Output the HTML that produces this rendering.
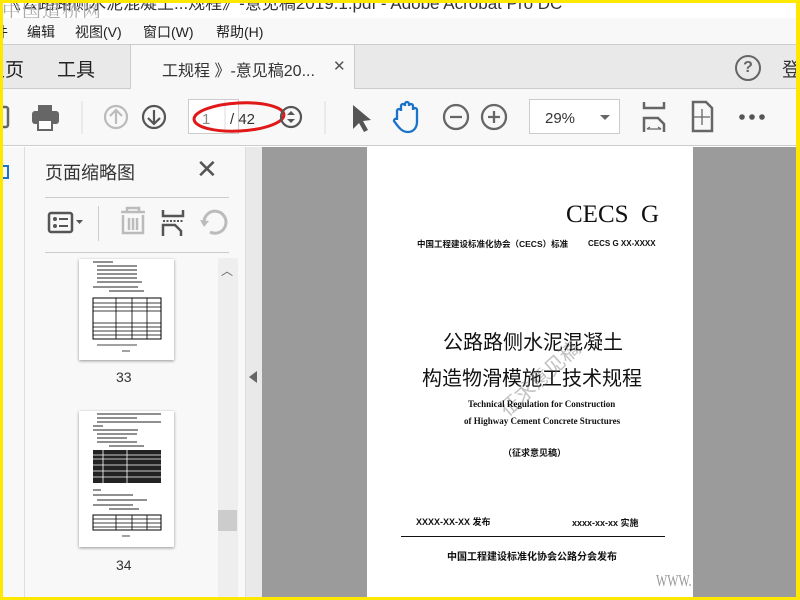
<!DOCTYPE html>
<html><head><meta charset="utf-8"><style>
*{margin:0;padding:0;box-sizing:border-box}
body{width:800px;height:600px;overflow:hidden;position:relative;background:#fff;font-family:"Liberation Sans","Noto Sans CJK SC",sans-serif}
.a{position:absolute}
.cj{font-family:"Liberation Sans","Noto Sans CJK SC",sans-serif}
.sf{font-family:"Liberation Serif","Noto Serif CJK SC",serif}
</style></head><body>
<!-- title bar -->
<div class="a" style="left:0;top:0;width:800px;height:18px;background:#fff;overflow:hidden">
<div class="a cj" style="left:4px;top:-11px;font-size:17px;color:#333;white-space:nowrap">《公路路侧水泥混凝土...规程》-意见稿2019.1.pdf - Adobe Acrobat Pro DC</div>
<div class="a sf" style="left:2px;top:-4px;font-size:19px;color:#aaa;letter-spacing:1px">中国道桥网</div>
</div>
<!-- menu -->
<div class="a" style="left:0;top:18px;width:800px;height:26px;background:#f8f8f8"></div>
<div class="a cj" style="left:0;top:22px;font-size:14px;color:#222;white-space:nowrap">
<span style="position:absolute;left:-6px">件</span><span style="position:absolute;left:27px">编辑</span><span style="position:absolute;left:75px">视图(V)</span><span style="position:absolute;left:143px">窗口(W)</span><span style="position:absolute;left:216px">帮助(H)</span></div>
<!-- tabs -->
<div class="a" style="left:0;top:44px;width:800px;height:45px;background:#e9e9e9;border-top:1px solid #ccc;border-bottom:1px solid #ccc"></div>
<div class="a" style="left:130px;top:44px;width:225px;height:45px;background:#f8f8f8;border-left:1px solid #ccc;border-right:1px solid #ccc;border-top:1px solid #ccc"></div>
<div class="a cj" style="left:-14px;top:55px;font-size:19px;color:#222">主页</div>
<div class="a cj" style="left:57px;top:55px;font-size:19px;color:#222">工具</div>
<div class="a cj" style="left:162px;top:57px;font-size:16px;color:#333;white-space:nowrap">工规程 》-意见稿20...</div>
<div class="a" style="left:333px;top:57px;font-size:15px;color:#555">✕</div>
<div class="a" style="left:735px;top:55px;width:26px;height:26px;border:2px solid #666;border-radius:50%;text-align:center;font-size:16px;line-height:22px;color:#666;font-weight:bold">?</div>
<div class="a cj" style="left:782px;top:55px;font-size:19px;color:#333">登</div>
<!-- toolbar -->
<div class="a" style="left:0;top:89px;width:800px;height:57px;background:#f8f8f8;border-bottom:1px solid #ccc"></div>
<svg class="a" style="left:0;top:89px" width="800" height="57">
<g fill="none" stroke="#666" stroke-width="2.5">
<rect x="-4" y="18" width="12" height="20" rx="2"/>
</g>
<g fill="#666"><rect x="38" y="16" width="14" height="6"/><rect x="32" y="22" width="27" height="13" rx="3"/><rect x="38" y="31" width="14" height="10" fill="#fff" stroke="#666" stroke-width="2"/></g>
<line x1="82" y1="12" x2="82" y2="45" stroke="#ddd"/>
<circle cx="116" cy="28" r="11" fill="none" stroke="#bbb" stroke-width="2.2"/><path d="M116 35V21M110 27l6-6 6 6" fill="none" stroke="#bbb" stroke-width="2.2"/>
<circle cx="154" cy="28" r="11" fill="none" stroke="#555" stroke-width="2.2"/><path d="M154 21v14M148 29l6 6 6-6" fill="none" stroke="#555" stroke-width="2.2"/>
<rect x="188.5" y="10.5" width="50" height="34" fill="#fff" stroke="#ccc"/>
<line x1="225" y1="11" x2="225" y2="44" stroke="#ddd"/>
<text x="202" y="35" font-size="15" fill="#888" font-family="Liberation Sans">1</text>
<text x="230" y="35" font-size="15" fill="#333" font-family="Liberation Sans">/ 42</text>
<ellipse cx="239" cy="28" rx="45" ry="14" fill="none" stroke="#e01818" stroke-width="3" transform="rotate(-3 239 28)"/>
<circle cx="291" cy="28" r="10" fill="none" stroke="#555" stroke-width="2.2"/><path d="M287 26l4-4 4 4zM287 30l4 4 4-4z" fill="#555"/>
<line x1="325" y1="12" x2="325" y2="45" stroke="#ddd"/>
<path d="M353 16l0 24 6-6 5 9 4-2-5-9 8-1z" fill="#555"/>
<path d="M397 31v-9a2 2 0 0 1 4 0v-5a2 2 0 0 1 4 0v-2a2 2 0 0 1 4 0v2a2 2 0 0 1 4 0v4a2 2 0 0 1 4 0v12c0 6-4 10-9 10s-8-3-11-7l-3-4a2 2 0 0 1 3-2z" fill="none" stroke="#1a73c8" stroke-width="2.3"/>
<circle cx="456" cy="28" r="12" fill="none" stroke="#666" stroke-width="2.3"/><path d="M450 28h12" stroke="#666" stroke-width="2.3"/>
<circle cx="494" cy="28" r="12" fill="none" stroke="#666" stroke-width="2.3"/><path d="M488 28h12M494 22v12" stroke="#666" stroke-width="2.3"/>
<rect x="529.5" y="10.5" width="90" height="34" fill="#fff" stroke="#ccc"/>
<text x="545" y="34" font-size="15" fill="#333" font-family="Liberation Sans">29%</text>
<path d="M600 26h10l-5 5z" fill="#666"/>
<path d="M644 13v6h20v-6M644 43v-14h14l6 6v8" fill="none" stroke="#666" stroke-width="2.5"/><path d="M647 40h14M647 40l3-2M661 40l-3-2" stroke="#666" stroke-width="1.3" fill="none"/>
<path d="M693 13h13l6 6v23h-19z" fill="none" stroke="#666" stroke-width="2.5"/><path d="M702 20v16M694 28h16" stroke="#666" stroke-width="1.3"/>
<circle cx="742" cy="28" r="2.8" fill="#555"/><circle cx="752" cy="28" r="2.8" fill="#555"/><circle cx="762" cy="28" r="2.8" fill="#555"/>
</svg>
<!-- left nav strip -->
<div class="a" style="left:0;top:147px;width:25px;height:453px;background:#f8f8f8;border-right:1px solid #ddd"></div>
<div class="a" style="left:2px;top:165px;width:7px;height:14px;border:2px solid #1a73c8;border-left:none"></div>
<!-- sidebar -->
<div class="a" style="left:25px;top:147px;width:220px;height:453px;background:#f8f8f8"></div>
<div class="a cj" style="left:45px;top:159px;font-size:18px;color:#333">页面缩略图</div>
<div class="a" style="left:196px;top:154px;font-size:26px;color:#555;font-weight:300">✕</div>
<div class="a" style="left:45px;top:197px;width:184px;height:1px;background:#ccc"></div>
<div class="a" style="left:45px;top:252px;width:184px;height:1px;background:#ccc"></div>
<div class="a" style="left:98px;top:206px;width:1px;height:35px;background:#ccc"></div>
<svg class="a" style="left:40px;top:200px" width="200" height="50">
<rect x="9" y="13" width="23" height="19" rx="2" fill="none" stroke="#555" stroke-width="2.5"/><circle cx="15" cy="19" r="2" fill="#555"/><circle cx="15" cy="26" r="2" fill="#555"/><path d="M19 19h9M19 26h9" stroke="#555" stroke-width="2"/><path d="M36 20h7l-3.5 4z" fill="#555"/>
<path d="M81 12h24M87 12v-4h12v4M83 15v18h20V15M89 18v12M93 18v12M97 18v12" fill="none" stroke="#bbb" stroke-width="2.5"/>
<path d="M123 10v6h20v-6M123 36v-11h12l6 6v5" fill="none" stroke="#555" stroke-width="2.5"/><path d="M123 21h20" stroke="#555" stroke-width="2" stroke-dasharray="2 1.5"/>
<path d="M170 32a11 11 0 1 0 -6-10" fill="none" stroke="#bbb" stroke-width="3"/><path d="M160 20l4 7 5-6z" fill="#bbb"/>
</svg>
<!-- thumbs -->
<div class="a" style="left:79px;top:259px;width:95px;height:101px;background:#fff;box-shadow:0 1px 3px rgba(0,0,0,.4)"></div>
<svg class="a" style="left:79px;top:259px" width="95" height="101">
<g stroke="#222" stroke-width="1"><path d="M14 3h20M18 7h40M18 11h40M18 15h40M18 19h40M18 23h45M14 28h45M30 32h35"/></g>
<rect x="14" y="39" width="68" height="41" fill="none" stroke="#000"/>
<g stroke="#000" stroke-width=".8"><path d="M14 44h68M14 48h68M14 52h68M14 64h68M14 68h68M14 72h68M14 76h68M37 39v41M53 39v41M68 39v41"/></g>
<path d="M18 86h40M43 92h8" stroke="#444"/>
</svg>
<div class="a" style="left:116px;top:369px;font-size:14px;color:#333">33</div>
<div class="a" style="left:79px;top:411px;width:95px;height:136px;background:#fff;box-shadow:0 1px 3px rgba(0,0,0,.4)"></div>
<svg class="a" style="left:79px;top:411px" width="95" height="136">
<g stroke="#222" stroke-width="1"><path d="M18 3h64M18 7h40M18 11h64M14 15h10M14 19h45M18 23h40M18 27h30M18 31h40M30 35h35"/></g>
<rect x="14" y="39" width="68" height="33" fill="#222"/>
<g stroke="#fff" stroke-width=".8"><path d="M14 44h68M14 48h68M14 54h68M14 60h68M14 66h68M24 39v33M48 39v33"/></g>
<g stroke="#222"><path d="M14 79h8M14 84h40M18 89h50M14 94h40M30 98h30"/></g>
<rect x="14" y="104" width="68" height="15" fill="none" stroke="#000"/>
<g stroke="#000" stroke-width=".8"><path d="M14 108h68M14 112h68M14 116h68M37 104v15M53 104v15M68 104v15"/></g>
<path d="M43 125h8" stroke="#444"/>
</svg>
<div class="a" style="left:116px;top:557px;font-size:14px;color:#333">34</div>
<!-- scrollbar -->
<div class="a" style="left:218px;top:258px;width:20px;height:342px;background:#eee"></div>
<div class="a" style="left:221px;top:262px;font-size:12px;color:#666">︿</div>
<div class="a" style="left:218px;top:510px;width:19px;height:21px;background:#ccc"></div>
<!-- collapse strip -->
<div class="a" style="left:245px;top:147px;width:17px;height:453px;background:#e9e9e9;border-left:1px solid #ddd"></div>
<div class="a" style="left:249px;top:371px;width:0;height:0;border-top:6px solid transparent;border-bottom:6px solid transparent;border-right:8px solid #666"></div>
<!-- doc area -->
<div class="a" style="left:262px;top:147px;width:538px;height:453px;background:#9b9b9b"></div>
<div class="a" style="left:367px;top:147px;width:326px;height:453px;background:#fff"></div>
<div class="a sf" style="left:566px;top:201px;font-size:25px;color:#111">CECS&nbsp; G</div>
<div class="a cj" style="left:417px;top:238px;font-size:8.5px;font-weight:bold;color:#111;white-space:nowrap">中国工程建设标准化协会（CECS）标准</div>
<div class="a" style="left:588px;top:239px;font-size:8px;font-weight:bold;color:#111">CECS G XX-XXXX</div>
<div class="a cj" style="left:443px;top:326px;font-size:20px;color:#111;white-space:nowrap">公路路侧水泥混凝土</div>
<div class="a cj" style="left:422px;top:362px;font-size:20px;color:#111;white-space:nowrap">构造物滑模施工技术规程</div>
<div class="a cj" style="left:492px;top:400px;font-size:20px;color:rgba(120,120,120,.45);transform:rotate(-42deg);transform-origin:left top;white-space:nowrap">征求意见稿</div>
<div class="a sf" style="left:468px;top:399px;font-size:9px;font-weight:bold;color:#111;white-space:nowrap">Technical Regulation for Construction</div>
<div class="a sf" style="left:464px;top:416px;font-size:9px;font-weight:bold;color:#111;white-space:nowrap">of Highway Cement Concrete Structures</div>
<div class="a cj" style="left:503px;top:446px;font-size:9px;font-weight:bold;color:#111">（征求意见稿）</div>
<div class="a cj" style="left:416px;top:515px;font-size:9px;font-weight:bold;color:#111;white-space:nowrap">XXXX-XX-XX 发布</div>
<div class="a cj" style="left:572px;top:516px;font-size:9px;font-weight:bold;color:#111;white-space:nowrap">xxxx-xx-xx 实施</div>
<div class="a" style="left:401px;top:536px;width:264px;height:1px;background:#111"></div>
<div class="a cj" style="left:447px;top:548px;font-size:10px;font-weight:bold;color:#111;white-space:nowrap">中国工程建设标准化协会公路分会发布</div>
<div class="a sf" style="left:656px;top:571px;font-size:17px;color:#999;transform:scaleX(0.7);transform-origin:left top">WWW.</div>
<!-- yellow border -->
<div class="a" style="left:0;top:0;width:800px;height:600px;border:3px solid #ffe800;border-right-width:4px"></div>
</body></html>
